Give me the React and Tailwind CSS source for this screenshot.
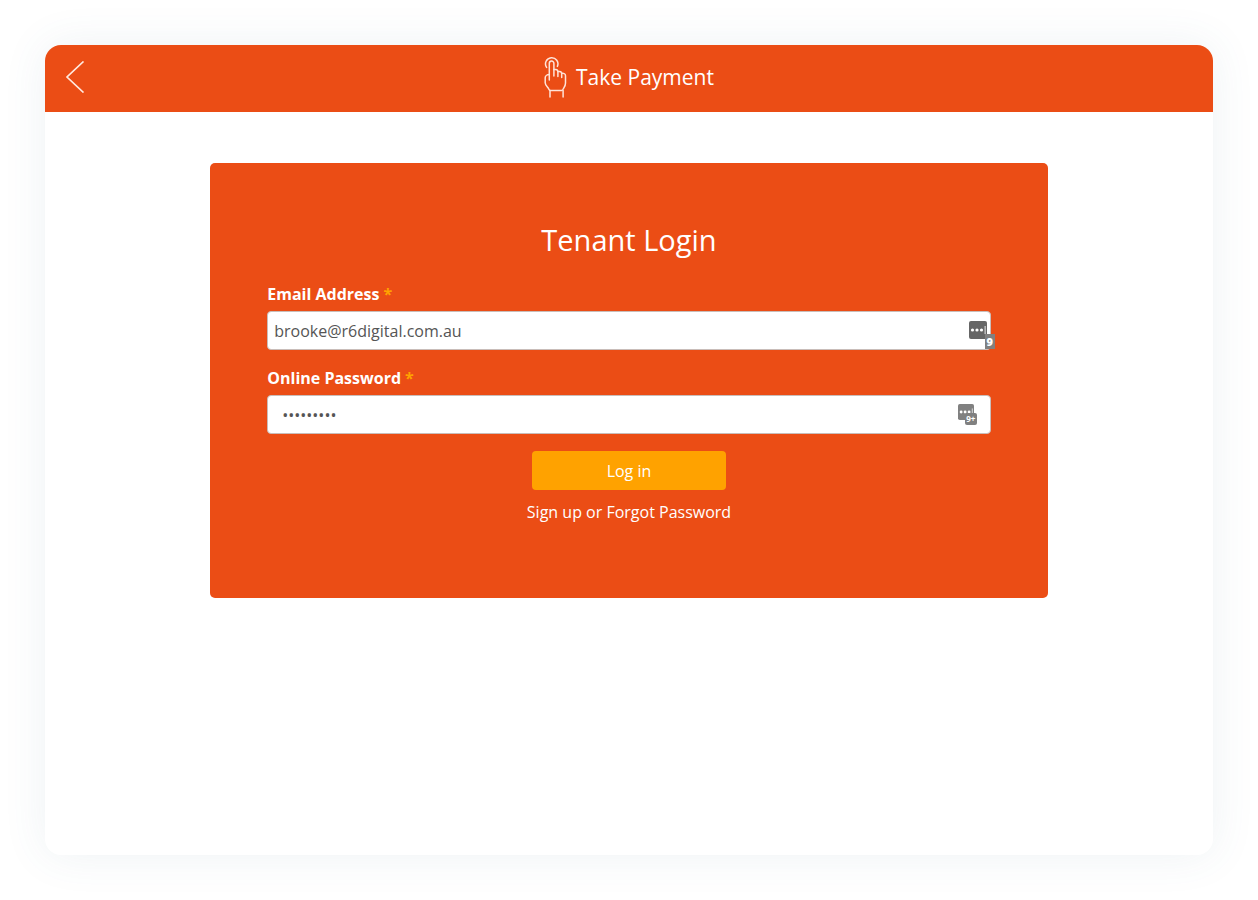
function TapIcon() {
  return (
    <svg className="h-[42px] w-6 shrink-0" viewBox="0 0 24 42" fill="none" stroke="#ffe3d8" strokeWidth="1.5" strokeLinecap="round" strokeLinejoin="round" aria-hidden="true">
      <path d="M2.600 11.400A6.200 6.200 0 1 1 13.400 10.400" />
      <path d="M5.300 24V7.400a2.300 2.300 0 0 1 4.600 0V20" />
      <path d="M9.900 13.600c2.400-.6 4 .2 4 2.200V20.600" />
      <path d="M13.900 15.600c2.300-.6 3.800.2 3.800 2.200V21.500" />
      <path d="M17.700 17.200c2.400-.2 3.800.8 3.800 2.600V27c0 3-1.400 4.400-2.100 5.600-.4 1.300-.7 1.900-1.800 1.900H6.600c-1.500 0-1.700-1.100-2.200-2.300C3 30.400 1.200 29 1.200 26.800V21.800c0-1.700 1.700-3.200 4.100-3.200" />
      <path d="M6 34.600V41M19.100 34.600V41" />
    </svg>
  );
}

function KeyDots({ className }) {
  return (
    <svg className={className} viewBox="0 0 18 18" aria-hidden="true">
      <rect width="18" height="18" rx="2" fill="currentColor" />
      <circle cx="3.5" cy="9" r="1.6" fill="#fff" />
      <circle cx="8" cy="9" r="1.6" fill="#fff" />
      <circle cx="12.5" cy="9" r="1.6" fill="#fff" />
      <rect x="15.500" y="5" width="1.300" height="8" fill="#ccc" />
    </svg>
  );
}

const label = "flex gap-1 text-base leading-6 font-bold text-white";
const input =
  "block h-[39px] w-full rounded border border-[#c9bdb9] bg-white text-base text-[#555] outline-none";

export default function App() {
  return (
    <div className="flex min-h-screen bg-white p-[45px] font-['Open_Sans',sans-serif]">
      <main className="flex flex-1 flex-col overflow-hidden rounded-[16px] bg-white shadow-[0_0_45px_rgba(70,110,130,0.09)]">
        <header className="grid h-[67px] grid-cols-[1fr_auto_1fr] items-center bg-[#eb4d15] px-5 pb-[3px]">
          <button type="button" aria-label="Back" className="justify-self-start">
            <svg className="h-8 w-5" viewBox="0 0 20 32" fill="none" stroke="#ffe9df" strokeWidth="1.7" aria-hidden="true">
              <path d="M18.5 .5L2 16l16.500 15.500" />
            </svg>
          </button>
          <div className="flex items-center gap-2">
            <TapIcon />
            <h1 className="text-[21px] leading-7 font-medium text-white">Take Payment</h1>
          </div>
        </header>

        <section className="mx-auto mt-[51px] w-[71.7%] rounded-[5px] bg-[#eb4d15] px-[57px] pt-[57px] pb-[74px]">
          <h2 className="text-center text-[29px] leading-10 text-white">Tenant Login</h2>
          <form className="mt-[22px]" onSubmit={(e) => e.preventDefault()}>
            <label htmlFor="email" className={label}>
              Email Address <span className="text-[#ffa200]">*</span>
            </label>
            <div className="relative mt-[5px]">
              <input id="email" type="email" defaultValue="brooke@r6digital.com.au" className={`${input} pr-10 pl-[6px]`} />
              <KeyDots className="absolute top-[10px] right-1 size-[18px] text-[#666]" />
              <span className="absolute top-[23px] -right-1 flex h-[15px] w-[10px] items-center justify-center bg-[#808080] text-[11px] leading-none font-extrabold text-white">
                9
              </span>
            </div>
            <label htmlFor="password" className={`${label} mt-4`}>
              Online Password <span className="text-[#ffa200]">*</span>
            </label>
            <div className="relative mt-[5px]">
              <input id="password" type="password" defaultValue="tenantpwd" className={`${input} pr-10 pl-[14px]`} />
              <KeyDots className="absolute top-[9px] right-[17px] size-4 text-[#808080]" />
              <span className="absolute top-[18px] right-[14px] flex h-3 w-[12px] items-center justify-center rounded-[2px] bg-[#808080] text-[8px] leading-none font-bold text-white">
                9+
              </span>
            </div>
            <button type="submit" className="mx-auto mt-[17px] block h-[39px] w-[194px] rounded bg-[#ffa200] text-base text-white">
              Log in
            </button>
            <p className="mt-[10px] text-center text-base leading-6 text-white">
              <a href="#signup">Sign up</a> or <a href="#forgot">Forgot Password</a>
            </p>
          </form>
        </section>
      </main>
    </div>
  );
}
